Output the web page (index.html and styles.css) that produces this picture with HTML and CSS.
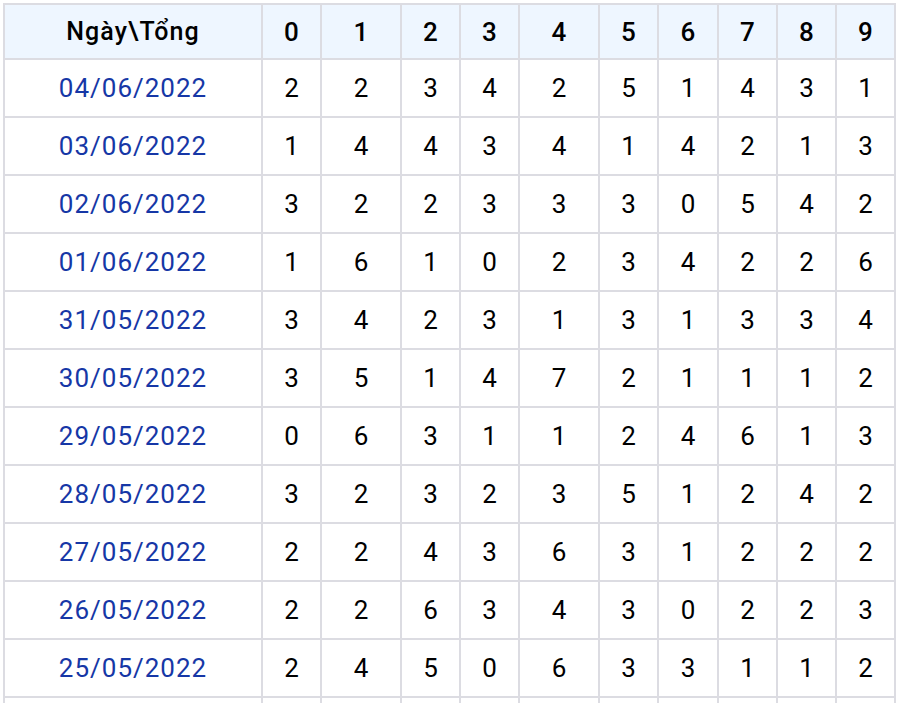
FILE: index.html
```html
<!DOCTYPE html>
<html lang="vi">
<head>
<meta charset="utf-8">
<title>Thống kê tổng</title>
<link rel="stylesheet" href="styles.css">
</head>
<body>
<table class="stats">
  <colgroup>
    <col class="c-date">
    <col class="c-n"><col class="c-w"><col class="c-n"><col class="c-n"><col class="c-w">
    <col class="c-n"><col class="c-m"><col class="c-n"><col class="c-n"><col class="c-n">
  </colgroup>
  <thead>
    <tr>
      <th class="h-date">Ngày\Tổng</th>
      <th>0</th><th>1</th><th>2</th><th>3</th><th>4</th><th>5</th><th>6</th><th>7</th><th>8</th><th>9</th>
    </tr>
  </thead>
  <tbody>
    <tr><td class="date">04/06/2022</td><td>2</td><td>2</td><td>3</td><td>4</td><td>2</td><td>5</td><td>1</td><td>4</td><td>3</td><td>1</td></tr>
    <tr><td class="date">03/06/2022</td><td>1</td><td>4</td><td>4</td><td>3</td><td>4</td><td>1</td><td>4</td><td>2</td><td>1</td><td>3</td></tr>
    <tr><td class="date">02/06/2022</td><td>3</td><td>2</td><td>2</td><td>3</td><td>3</td><td>3</td><td>0</td><td>5</td><td>4</td><td>2</td></tr>
    <tr><td class="date">01/06/2022</td><td>1</td><td>6</td><td>1</td><td>0</td><td>2</td><td>3</td><td>4</td><td>2</td><td>2</td><td>6</td></tr>
    <tr><td class="date">31/05/2022</td><td>3</td><td>4</td><td>2</td><td>3</td><td>1</td><td>3</td><td>1</td><td>3</td><td>3</td><td>4</td></tr>
    <tr><td class="date">30/05/2022</td><td>3</td><td>5</td><td>1</td><td>4</td><td>7</td><td>2</td><td>1</td><td>1</td><td>1</td><td>2</td></tr>
    <tr><td class="date">29/05/2022</td><td>0</td><td>6</td><td>3</td><td>1</td><td>1</td><td>2</td><td>4</td><td>6</td><td>1</td><td>3</td></tr>
    <tr><td class="date">28/05/2022</td><td>3</td><td>2</td><td>3</td><td>2</td><td>3</td><td>5</td><td>1</td><td>2</td><td>4</td><td>2</td></tr>
    <tr><td class="date">27/05/2022</td><td>2</td><td>2</td><td>4</td><td>3</td><td>6</td><td>3</td><td>1</td><td>2</td><td>2</td><td>2</td></tr>
    <tr><td class="date">26/05/2022</td><td>2</td><td>2</td><td>6</td><td>3</td><td>4</td><td>3</td><td>0</td><td>2</td><td>2</td><td>3</td></tr>
    <tr><td class="date">25/05/2022</td><td>2</td><td>4</td><td>5</td><td>0</td><td>6</td><td>3</td><td>3</td><td>1</td><td>1</td><td>2</td></tr>
    <tr><td class="date">&nbsp;</td><td></td><td></td><td></td><td></td><td></td><td></td><td></td><td></td><td></td><td></td></tr>
  </tbody>
</table>
</body>
</html>
```

FILE: styles.css
```css
html, body {
  margin: 0;
  padding: 0;
  background: #ffffff;
}

body {
  padding: 3px 0 0 3px;
  font-family: Roboto, "Liberation Sans", Arial, sans-serif;
  color: #000000;
}

.stats {
  border-collapse: separate;
  border-spacing: 0;
  table-layout: fixed;
  width: 893px;
  border-left: 2px solid #dcdce2;
  border-top: 2px solid #dcdce2;
}

.c-date { width: 258px; }
.c-n { width: 59px; }
.c-m { width: 60px; }
.c-w { width: 80px; }

.stats th,
.stats td {
  box-sizing: border-box;
  padding: 0;
  text-align: center;
  vertical-align: middle;
  border-right: 2px solid #dcdce2;
  border-bottom: 2px solid #dcdce2;
}

.stats thead th {
  height: 55px;
  background: #eef6ff;
  font-weight: 500;
  font-size: 26px;
  color: #000000;
}

.stats thead th.h-date {
  font-size: 25px;
  font-weight: 500;
  letter-spacing: 1.1px;
}

.stats tbody td {
  height: 58px;
  font-size: 26px;
  font-weight: 400;
  color: #000000;
}

.stats tbody td.date {
  color: #1637a6;
  letter-spacing: 1px;
}
```
